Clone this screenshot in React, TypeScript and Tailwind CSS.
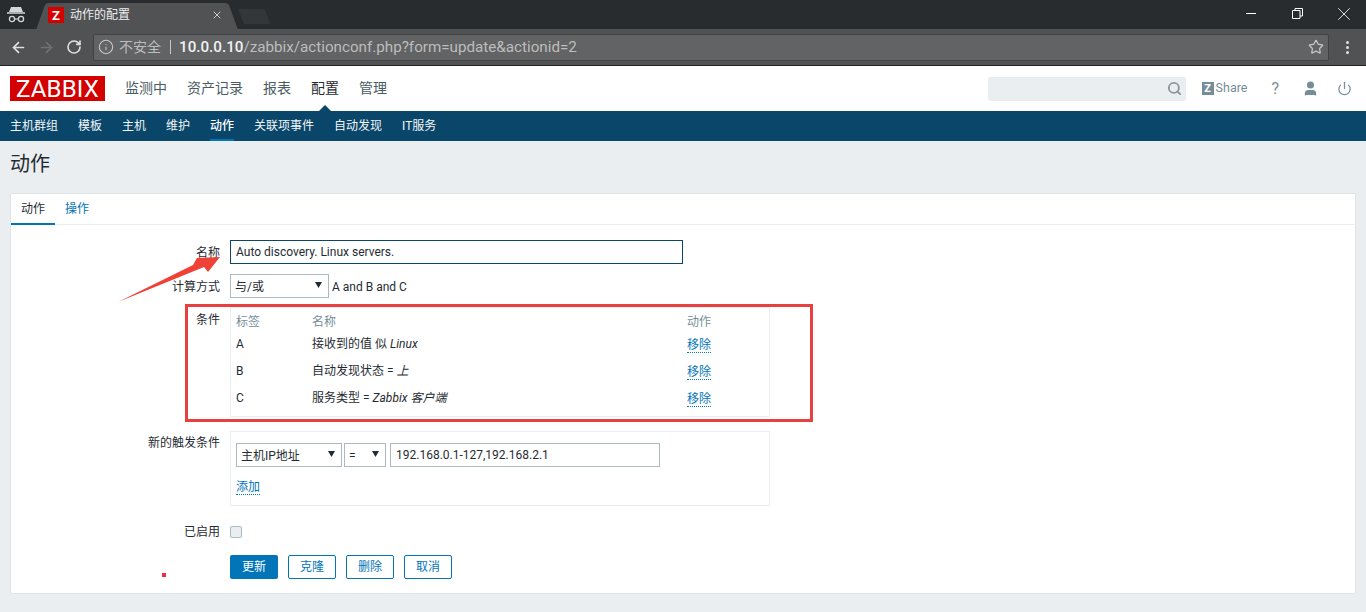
import { ArrowLeft, ArrowRight, Info, RotateCw, Search, Star, User, Power, X } from "lucide-react";

const font = "font-['Roboto','Noto_Sans_CJK_SC',sans-serif]";

const topMenu = [
  { label: "监测中", active: false },
  { label: "资产记录", active: false },
  { label: "报表", active: false },
  { label: "配置", active: true },
  { label: "管理", active: false },
];

const subMenu = ["主机群组", "模板", "主机", "维护", "动作", "关联项事件", "自动发现", "IT服务"];

const conditions = [
  { tag: "A", text: "接收到的值 似 ", value: "Linux" },
  { tag: "B", text: "自动发现状态 = ", value: "上" },
  { tag: "C", text: "服务类型 = ", value: "Zabbix 客户端" },
];

function Caret({ className }: { className?: string }) {
  return (
    <svg width="7" height="6" viewBox="0 0 7 6" className={className}>
      <path d="M0 0h7L3.5 6z" fill="#1f2c33" />
    </svg>
  );
}

function Select({ label, width, height }: { label: string; width: string; height: string }) {
  return (
    <div className={`flex items-center justify-between border border-[#acbbc2] bg-white pl-[4px] pr-[6px] text-[12px] text-[#1f2c33] ${width} ${height}`}>
      <span className="pt-[2px]">{label}</span>
      <Caret className="mb-[2px]" />
    </div>
  );
}

function Chrome() {
  return (
    <div className="relative h-[66px] shrink-0 bg-[#282c2f]">
      {/* tab shapes */}
      <svg width="280" height="30" viewBox="0 0 280 30" className="absolute left-0 top-0">
        <path d="M238 9h24q3 0 4 3l4 12h-26z" fill="#33373a" />
        <path d="M36 30 45 5q1-2 4-2h176q3 0 4 2l9 25z" fill="#515254" />
      </svg>
      <svg width="24" height="20" viewBox="0 0 24 20" className="absolute left-[5px] top-[5px]" fill="none">
        <path d="M6 2h10l2 5H4z" fill="#d5d6d7" />
        <path d="M2 8h18" stroke="#d5d6d7" strokeWidth="1.5" />
        <circle cx="7" cy="14" r="2.6" stroke="#d5d6d7" strokeWidth="1.3" />
        <circle cx="16" cy="14" r="2.6" stroke="#d5d6d7" strokeWidth="1.3" />
        <path d="M9.5 14h4" stroke="#d5d6d7" strokeWidth="1.2" />
      </svg>
      <div className="absolute left-[48px] top-[7px] flex h-[16px] w-[16px] items-center justify-center bg-[#d40000] text-[13px] font-bold leading-none text-white">
        Z
      </div>
      <span className="absolute left-[70px] top-[6px] text-[12px] leading-[18px] text-[#eceded]">动作的配置</span>
      <X size={12} strokeWidth={2} className="absolute left-[211px] top-[9px] text-[#c9c9ca]" />

      {/* window buttons */}
      <div className="absolute left-[1246px] top-[13px] h-px w-[10px] bg-white" />
      <svg width="11" height="11" viewBox="0 0 11 11" fill="none" className="absolute left-[1292px] top-[8px]">
        <path d="M.5 2.5h7.5v8H.5zM3 2.5V.5h7.5v7.5H8" stroke="#fff" />
      </svg>
      <X size={22} strokeWidth={0.9} className="absolute left-[1333px] top-[3px] text-white" />

      {/* toolbar */}
      <div className="absolute inset-x-0 bottom-0 flex h-[37px] items-center border-b border-[#222] bg-[#515254]">
        <ArrowLeft size={17} strokeWidth={2.4} className="ml-[10px] text-[#e0e0e0]" />
        <ArrowRight size={17} strokeWidth={2.4} className="ml-[11px] text-[#707172]" />
        <RotateCw size={16} strokeWidth={2.4} className="ml-[11px] text-[#e0e0e0]" />
        <div className="ml-[11px] flex h-[27px] w-[1236px] items-center rounded-[2px] border border-[#414243] bg-[#626364] text-[15.2px]">
          <Info size={16} strokeWidth={1.6} className="ml-[4px] text-[#c8c8c8]" />
          <span className="ml-[5px] text-[14px] text-[#bdbdbd]">不安全</span>
          <span className="ml-[9px] h-[14px] w-px bg-[#c8c8c8]" />
          <span className="ml-[8px] font-medium text-[#f1f1f1]">10.0.0.10</span>
          <span className="text-[#bdbdbd]">/zabbix/actionconf.php?form=update&amp;actionid=2</span>
          <Star size={16} strokeWidth={1.8} className="ml-auto mr-[4px] text-[#c8c8c8]" />
        </div>
        <div className="ml-[17px] flex flex-col gap-[2px]">
          <span className="size-[3px] rounded-full bg-[#e0e0e0]" />
          <span className="size-[3px] rounded-full bg-[#e0e0e0]" />
          <span className="size-[3px] rounded-full bg-[#e0e0e0]" />
        </div>
      </div>
    </div>
  );
}

function Header() {
  return (
    <div className="flex h-[45px] shrink-0 items-center bg-white pl-[10px]">
      <div className="flex h-[25px] w-[95px] items-center justify-center bg-[#d40000] text-[24px] leading-none tracking-[0.2px] text-white">
        ZABBIX
      </div>
      <div className="ml-[20px] flex gap-[20px] text-[14px]">
        {topMenu.map((m) => (
          <span key={m.label} className={`relative ${m.active ? "text-[#1f2c33]" : "text-[#4a5b63]"}`}>
            {m.label}
            {m.active && (
              <span className="absolute left-1/2 top-[27px] h-0 w-0 -translate-x-1/2 border-x-[6px] border-b-[6px] border-x-transparent border-b-[#0a466a]" />
            )}
          </span>
        ))}
      </div>
      <div className="ml-auto flex h-[24px] w-[198px] items-center justify-end rounded-[2px] bg-[#ebeef0] pr-[4px]">
        <Search size={15} strokeWidth={3} className="text-[#8a979d]" />
      </div>
      <div className="ml-[16px] flex h-[13px] w-[12px] items-center justify-center bg-[#768d99] text-[11px] font-bold leading-none text-white">
        Z
      </div>
      <span className="ml-[2px] text-[12.5px] text-[#768d99]">Share</span>
      <span className="ml-[24px] text-[16px] text-[#768d99]">?</span>
      <User size={17} fill="#768d99" className="ml-[23px] text-[#768d99]" />
      <Power size={15} strokeWidth={2} className="ml-[18px] mr-[14px] text-[#768d99]" />
    </div>
  );
}

function SubNav() {
  return (
    <div className="flex h-[30px] shrink-0 gap-[20px] bg-[#0a466a] pl-[10px] text-[12px] leading-[30px] text-[#f2f6f8]">
      {subMenu.map((s) => (
        <span key={s} className={`relative ${s === "动作" ? "font-medium text-white" : ""}`}>
          {s}
          {s === "动作" && <span className="absolute inset-x-0 bottom-0 h-[2px] bg-[#0275b8]" />}
        </span>
      ))}
    </div>
  );
}

function Row({ label, className, labelClass, children }: { label: string; className?: string; labelClass?: string; children: React.ReactNode }) {
  return (
    <div className={`flex ${className ?? ""}`}>
      <div className={`w-[209px] shrink-0 text-right text-[12px] text-[#1f2c33] ${labelClass ?? ""}`}>{label}</div>
      <div className="ml-[10px] min-w-0 flex-1">{children}</div>
    </div>
  );
}

function DottedLink({ children }: { children: React.ReactNode }) {
  return <span className="border-b border-dotted border-[#0275b8] text-[12px] leading-[14px] text-[#0275b8]">{children}</span>;
}

function Form() {
  return (
    <div className="relative ml-[10px] mr-[10px] mt-[16px] h-[401px] rounded-[2px] border border-[#dfe4e7] bg-white">
      <div className="flex h-[31px] border-b border-[#ebeef0] text-[12px] leading-[30px]">
        <span className="relative w-[44px] text-center text-[#1f2c33]">
          动作
          <span className="absolute inset-x-0 bottom-[-1px] h-[2px] bg-[#0275b8]" />
        </span>
        <span className="ml-[10px] text-[#0275b8]">操作</span>
      </div>

      <Row label="名称" className="mt-[15px] items-center" labelClass="pt-[1px]">
        <div className="flex h-[24px] w-[453px] items-center border border-[#0a466a] bg-white pl-[5px] text-[12px] text-[#1f2c33]">
          Auto discovery. Linux servers.
        </div>
      </Row>

      <Row label="计算方式" className="mt-[10px] items-center" labelClass="pt-[1px]">
        <div className="flex items-center gap-[3px]">
          <Select label="与/或" width="w-[99px]" height="h-[24px]" />
          <span className="pt-[2px] text-[12px] text-[#1f2c33]">A and B and C</span>
        </div>
      </Row>

      <Row label="条件" className="mt-[9px]" labelClass="pt-[4px]">
        <div className="h-[110px] w-[540px] border border-[#ebeef0] px-[5px] text-[12px] text-[#1f2c33]">
          <div className="flex h-[22px] items-center pt-[6px] text-[#768d99]">
            <span className="w-[76px]">标签</span>
            <span className="w-[375px]">名称</span>
            <span>动作</span>
          </div>
          {conditions.map((c) => (
            <div key={c.tag} className="flex h-[27px] items-center">
              <span className="w-[76px]">{c.tag}</span>
              <span className="w-[375px]">
                {c.text}
                <em>{c.value}</em>
              </span>
              <span className="mt-[2px]">
                <DottedLink>移除</DottedLink>
              </span>
            </div>
          ))}
        </div>
      </Row>

      <Row label="新的触发条件" className="mt-[14px]" labelClass="pt-[3px]">
        <div className="h-[75px] w-[540px] border border-[#ebeef0] px-[5px] pt-[11px]">
          <div className="flex items-center gap-[2px]">
            <Select label="主机IP地址" width="w-[106px]" height="h-[24px]" />
            <Select label="=" width="w-[42px]" height="h-[24px]" />
            <div className="ml-[2px] flex h-[24px] w-[270px] items-center border border-[#acbbc2] pl-[5px] text-[12px] text-[#1f2c33]">
              192.168.0.1-127,192.168.2.1
            </div>
          </div>
          <div className="mt-[7px]">
            <DottedLink>添加</DottedLink>
          </div>
        </div>
      </Row>

      <Row label="已启用" className="mt-[17px] items-center">
        <div className="size-[12px] rounded-[2px] border border-[#acbbc2] bg-[#ebeef0]" />
      </Row>

      <div className="ml-[219px] mt-[14px] flex gap-[10px] text-[12px]">
        <div className="flex h-[24px] w-[48px] items-center justify-center rounded-[2px] bg-[#0275b8] text-white">更新</div>
        {["克隆", "删除", "取消"].map((b) => (
          <div key={b} className="flex h-[24px] w-[48px] items-center justify-center rounded-[2px] border border-[#0275b8] text-[#0275b8]">
            {b}
          </div>
        ))}
      </div>
    </div>
  );
}

export default function App() {
  return (
    <div className={`relative flex h-[612px] w-[1366px] flex-col overflow-hidden bg-[#ebeef0] ${font}`}>
      <Chrome />
      <Header />
      <SubNav />
      <div className="pl-[10px] pt-[10px] text-[20px] leading-[26px] text-[#1f2c33]">动作</div>
      <Form />

      {/* screenshot annotations */}
      <svg width="120" height="70" viewBox="0 0 120 70" className="absolute left-[115px] top-[250px]">
        <path d="M3 52 78 15 82 8 105 7 93 22 89 17z" fill="#ef4136" />
      </svg>
      <div className="absolute left-[185px] top-[304px] h-[118px] w-[628px] border-[3px] border-[#e8403f]" />
      <div className="absolute left-[162px] top-[573px] size-[4px] bg-[#e8303f]" />
    </div>
  );
}
